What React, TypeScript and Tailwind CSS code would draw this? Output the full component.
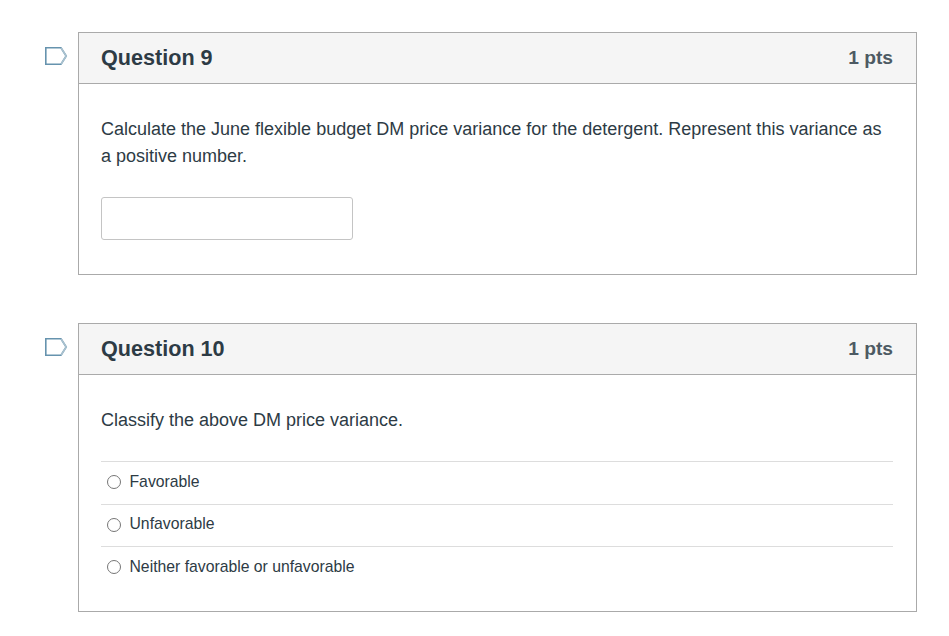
const FONT = "font-['Liberation_Sans',Arial,sans-serif]";

function Flag() {
  return (
    <svg width="24" height="20" viewBox="0 0 24 20" className="block">
      <path d="M1.8 0.8H17L22.2 9L17 17.2H1.8Z" fill="#fff" stroke="#6693ae" strokeWidth="1.6" />
      <path d="M17 0.8L22.2 9L17 17.2" fill="none" stroke="#a9c1cf" strokeWidth="1.6" />
    </svg>
  );
}

function Radio({ label }: { label: string }) {
  return (
    <div className="flex h-[42.5px] items-start border-t border-[#dddddd] pl-[6px]">
      <span className="mt-[13px] h-[14px] w-[14px] rounded-full border border-[#767676] bg-white" />
      <span className="ml-[8.5px] mt-[9.5px] text-[15.75px] leading-[20px] text-[#2d3b45]">{label}</span>
    </div>
  );
}

function Question({
  number,
  children,
}: {
  number: number;
  children: React.ReactNode;
}) {
  return (
    <div className="flex">
      <div className="w-[78px] shrink-0 pl-[44px] pt-[15px]">
        <Flag />
      </div>
      <div className="w-[839px] border border-[#aaaaaa]">
        <div className="flex h-[51px] items-center justify-between border-b border-[#aaaaaa] bg-[#f5f5f5] pl-[22px] pr-[23px]">
          <span className="text-[21.6px] font-bold text-[#2d3b45]">Question {number}</span>
          <span className="mt-[1px] text-[19.2px] font-bold text-[#4d5a63]">1 pts</span>
        </div>
        {children}
      </div>
    </div>
  );
}

export default function App() {
  return (
    <div className={`${FONT} h-[636px] w-[949px] bg-white pt-[32px]`}>
      <Question number={9}>
        <div className="h-[190px] pl-[22px] pr-[23px] pt-[32px]">
          <p className="text-[18px] leading-[27px] text-[#2d3b45]">
            Calculate the June flexible budget DM price variance for the detergent. Represent this variance as a positive number.
          </p>
          <div className="mt-[27px] h-[43px] w-[252px] rounded-[3px] border border-[#c4c4c4] bg-white" />
        </div>
      </Question>
      <div className="h-[48px]" />
      <Question number={10}>
        <div className="h-[236px] pl-[22px] pr-[23px] pt-[32px]">
          <p className="text-[18px] leading-[27px] text-[#2d3b45]">Classify the above DM price variance.</p>
          <div className="mt-[27px]">
            <Radio label="Favorable" />
            <Radio label="Unfavorable" />
            <Radio label="Neither favorable or unfavorable" />
          </div>
        </div>
      </Question>
    </div>
  );
}
